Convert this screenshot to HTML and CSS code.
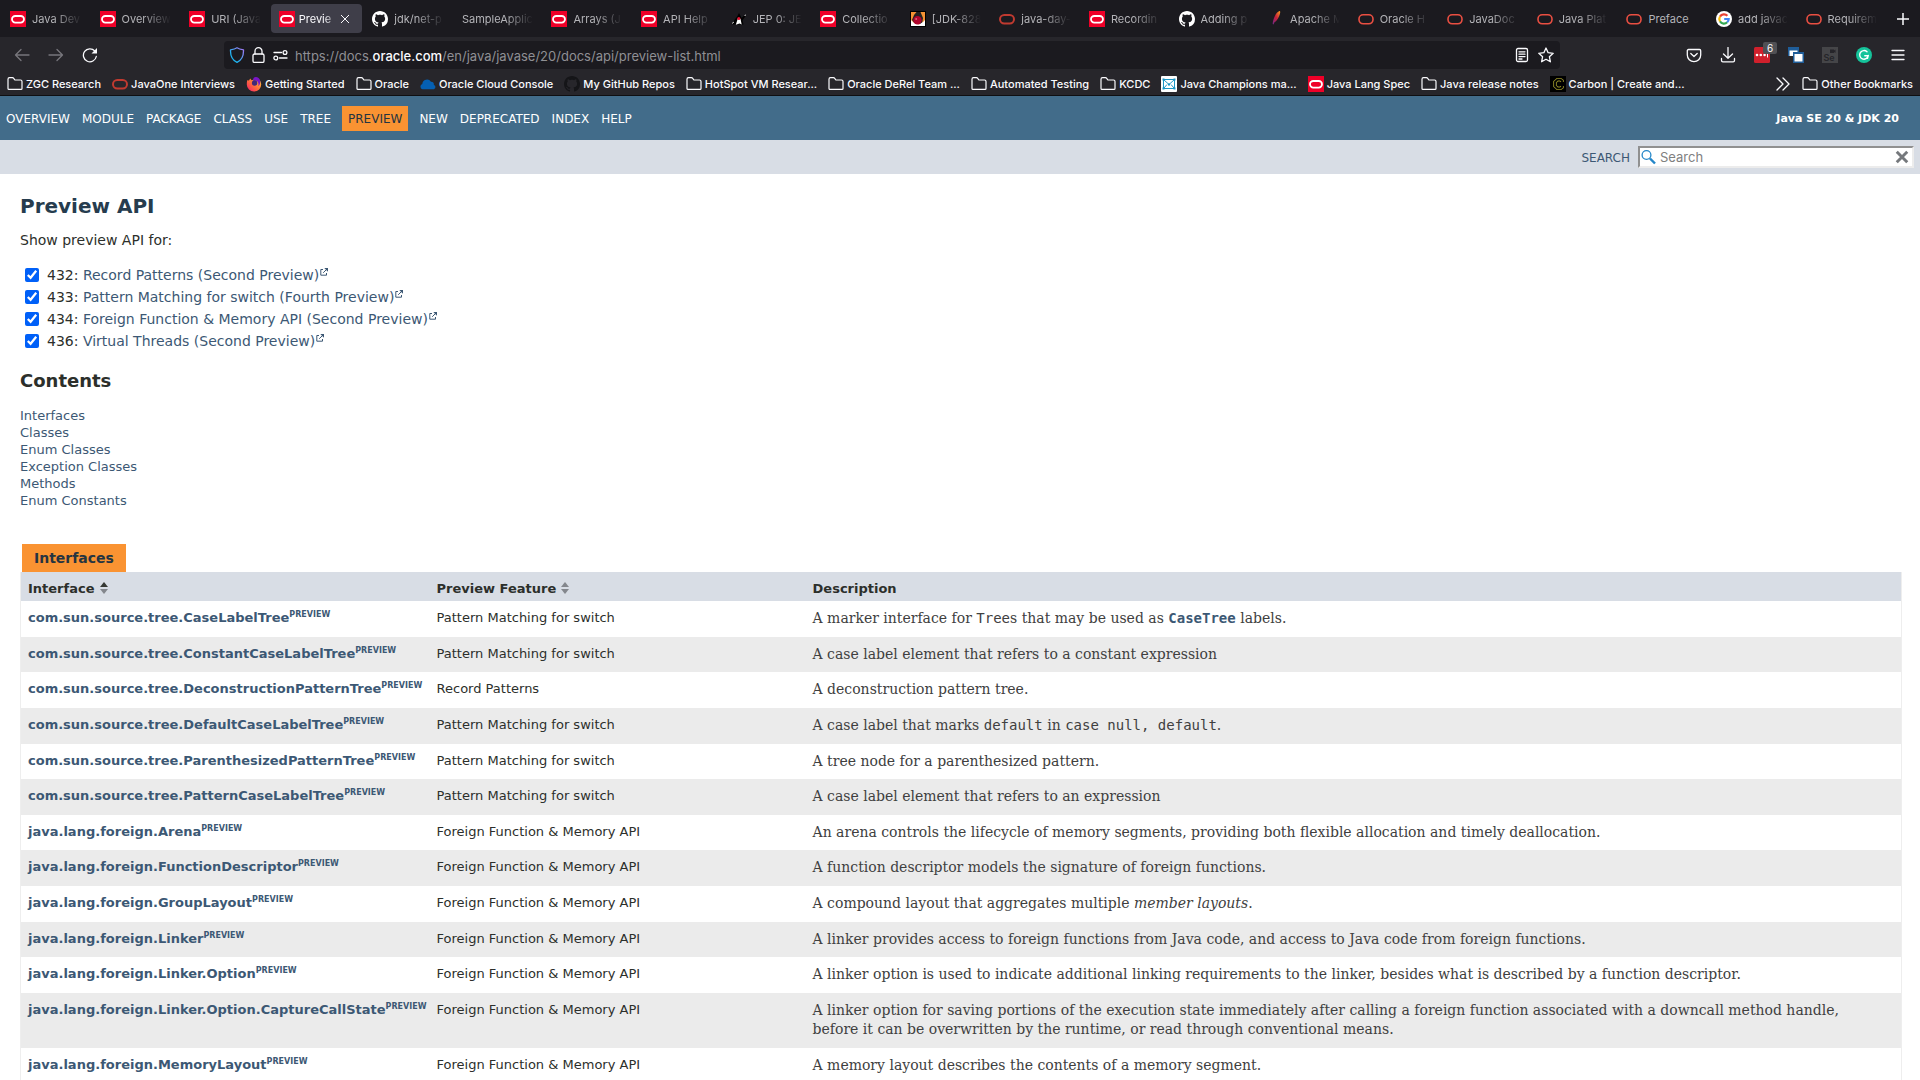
FILE: index.html
```
<!DOCTYPE html>
<html lang="en">
<head>
    <meta charset="UTF-8">
    <meta name="viewport" content="width=device-width, initial-scale=1.0">
    <title>Preview API (Java SE 20 &amp; JDK 20)</title>
    <link rel="stylesheet" href="styles.css">
</head>
<body>
    <!-- icon sprite -->
    <svg class="sprite" aria-hidden="true">
        <defs>
            <linearGradient id="shieldFill" x1="0" y1="1" x2="1" y2="0">
                <stop offset="0.3" stop-color="#1fb4f0"/><stop offset="0.9" stop-color="#9a7cf5"/>
            </linearGradient>
            <linearGradient id="featherFill" x1="0" y1="1" x2="1" y2="0">
                <stop offset="0" stop-color="#6d2a8c"/><stop offset="0.5" stop-color="#c8203a"/><stop offset="1" stop-color="#f6a01c"/>
            </linearGradient>
            <linearGradient id="foxFill" x1="0" y1="1" x2="1" y2="0">
                <stop offset="0" stop-color="#f5156c"/><stop offset="0.5" stop-color="#ff7139"/><stop offset="1" stop-color="#ffd23c"/>
            </linearGradient>
        </defs>
        <symbol id="oracle" viewBox="0 0 16 16">
            <rect width="16" height="16" fill="#ef0028"/>
            <rect x="2" y="5" width="12" height="6.6" rx="3.3" fill="none" stroke="#fff" stroke-width="1.8"/>
        </symbol>
        <symbol id="ring" viewBox="0 0 16 16">
            <rect x="1" y="4" width="14" height="8.6" rx="4.3" fill="none" stroke="currentColor" stroke-width="2"/>
        </symbol>
        <symbol id="ring-thin" viewBox="0 0 16 16">
            <rect x="1" y="3.8" width="14" height="9" rx="4.2" fill="none" stroke="currentColor" stroke-width="1.6"/>
        </symbol>
        <symbol id="github" viewBox="0 0 16 16">
            <path fill="currentColor" d="M8 0C3.58 0 0 3.58 0 8c0 3.54 2.29 6.53 5.47 7.59.4.07.55-.17.55-.38 0-.19-.01-.82-.01-1.49-2.01.37-2.53-.49-2.69-.94-.09-.23-.48-.94-.82-1.13-.28-.15-.68-.52-.01-.53.63-.01 1.08.58 1.23.82.72 1.21 1.87.87 2.33.66.07-.52.28-.87.51-1.07-1.78-.2-3.64-.89-3.64-3.95 0-.87.31-1.59.82-2.15-.08-.2-.36-1.02.08-2.12 0 0 .67-.21 2.2.82.64-.18 1.32-.27 2-.27s1.36.09 2 .27c1.53-1.04 2.2-.82 2.2-.82.44 1.1.16 1.92.08 2.12.51.56.82 1.27.82 2.15 0 3.07-1.87 3.75-3.65 3.95.29.25.54.73.54 1.48 0 1.07-.01 1.93-.01 2.2 0 .21.15.46.55.38A8.01 8.01 0 0 0 16 8c0-4.42-3.58-8-8-8z"/>
        </symbol>
        <symbol id="duke" viewBox="0 0 16 16">
            <path fill="#000" d="M8 2l2.600 5 3-3 1.400.5-3.500 5L12.500 13.500H3L.8 13l3-4.500L6.500 5z"/>
            <path fill="#fff" d="M6.800 7.500l2.700.3 1.200 5.700-2.200-1-3.700 1.200z"/>
            <path stroke="#fff" stroke-width=".8" d="M1 12.500l2-1.500M13.500 4.500l1.500-.5" fill="none"/>
            <circle cx="7.800" cy="7.600" r="1.500" fill="#e01030"/>
        </symbol>
        <symbol id="jdk" viewBox="0 0 16 16">
            <rect x=".5" y=".5" width="15" height="15" fill="#f59233" stroke="#000"/>
            <path fill="#222" d="M4 4l2.500-3h4l2.500 6-1 6H5L2 9z"/>
            <path fill="#fff" d="M1 9l3 3 5 1.500 4-2.500 2-2v6H1z"/>
            <circle cx="7.500" cy="9.300" r="4.200" fill="#b0052c"/>
            <circle cx="6.200" cy="8" r="1" fill="#e0607c"/>
        </symbol>
        <symbol id="feather" viewBox="0 0 16 16">
            <path fill="url(#featherFill)" d="M11.500 0c1.200 0 .8 2.500-.4 5.200C9.600 8.500 8 10.500 6.500 11.200l-1 2.300-.8-.5c.2-4.500 3.200-12 6.800-13z"/>
        </symbol>
        <symbol id="google" viewBox="0 0 16 16">
            <circle cx="8" cy="8" r="8" fill="#fff"/>
            <path fill="none" stroke="#ea4335" stroke-width="2.200" d="M4 5.600A4.700 4.700 0 0 1 11.400 4.800"/>
            <path fill="none" stroke="#fbbc05" stroke-width="2.200" d="M4 5.600a4.700 4.700 0 0 0 0 4.800"/>
            <path fill="none" stroke="#34a853" stroke-width="2.200" d="M4 10.400a4.700 4.700 0 0 0 7.200.9"/>
            <path fill="none" stroke="#4285f4" stroke-width="2.200" d="M11.200 11.300A4.700 4.700 0 0 0 12.700 8H8.200"/>
        </symbol>
        <symbol id="folder" viewBox="0 0 16 16">
            <path fill="none" stroke="currentColor" stroke-width="1.200" stroke-linejoin="round" d="M1 12.400V3.200c0-.9.600-1.500 1.500-1.500h3c.5 0 .9.200 1.200.6l1.200 1.700h5.600c.9 0 1.500.6 1.500 1.500v6.900c0 .6-.4 1-1 1H2c-.6 0-1-.4-1-1z"/>
        </symbol>
        <symbol id="firefox" viewBox="0 0 16 16">
            <path fill="url(#foxFill)" d="M1.200 4.200L3 4.400l1.200-1.800 1.400 1.600C7.500 4 9 2.500 11.500 2.200c2.200 1.300 3.700 3.500 3.700 6.100A7.200 7.200 0 0 1 .8 8.500c0-1.600.1-2.900.4-4.300z"/>
            <path fill="#7a16c8" d="M7.500 2C9.800-.2 13.500 1.500 14.200 5c.4 2-.6 4.200-2 5 .8-2.500-.2-4.800-2-5.200-1.100-.3-2.200-.2-3.200.3z"/>
            <circle cx="8.600" cy="7" r="2.700" fill="#402a78"/>
        </symbol>
        <symbol id="cloud" viewBox="0 0 16 16">
            <path fill="#0560b4" d="M2.500 13.200A2.700 2.700 0 0 1 2.300 8 4.700 4.700 0 0 1 11 5.800a3 3 0 0 1 2.900 3.200 2.200 2.200 0 0 1 0 4.200z"/>
        </symbol>
        <symbol id="champions" viewBox="0 0 16 16">
            <rect width="16" height="16" rx="1" fill="#fff"/>
            <path fill="none" stroke="#1c96c5" stroke-width="1" d="M2.500 3.500h11v9h-11zM2.500 3.500L8 8.500l5.500-5M3 12l3-3.500M13 12l-3-3.500"/>
            <path fill="#1c96c5" d="M1.500 2.500h2v2h-2zM12.500 2.500h2v2h-2zM1.500 11.500h2v2h-2zM12.500 11.500h2v2h-2zM7 7.500h2v2H7z"/>
        </symbol>
        <symbol id="carbon" viewBox="0 0 16 16">
            <rect width="16" height="16" fill="#000"/>
            <path fill="none" stroke="#97902a" stroke-width="3.600" d="M12 6V4.800L10.500 3.700h-3L5 6v4l2.500 2.300h3L12 11.200V10"/>
            <path fill="none" stroke="#000" stroke-width="1.800" d="M12 6V4.800L10.500 3.700h-3L5 6v4l2.500 2.300h3L12 11.200V10"/>
        </symbol>
        <symbol id="external" viewBox="0 0 8 8">
            <path fill="none" stroke="currentColor" stroke-width="1" d="M3 1.500H.8v5.700h5.700V5M3.200 4.800L6.800 1.200"/>
            <path fill="currentColor" d="M4.300 0H8v3.700L6.700 2.500z"/>
        </symbol>
    </svg>

    <header class="browser">
        <div class="tab-strip">
            <div class="tab"><svg class="icon"><use href="#oracle"/></svg><button type="button">Java Dev</button></div>
            <div class="tab"><svg class="icon"><use href="#oracle"/></svg><button type="button">Overview</button></div>
            <div class="tab"><svg class="icon"><use href="#oracle"/></svg><button type="button">URI (Java</button></div>
            <div class="tab active">
                <svg class="icon"><use href="#oracle"/></svg><button type="button">Previe</button>
                <button type="button" class="close" aria-label="Close tab"><svg viewBox="0 0 10 10"><path d="M1 1l8 8M9 1L1 9"/></svg></button>
            </div>
            <div class="tab"><svg class="icon white"><use href="#github"/></svg><button type="button">jdk/net-p</button></div>
            <div class="tab"><button type="button">SampleApplic</button></div>
            <div class="tab"><svg class="icon"><use href="#oracle"/></svg><button type="button">Arrays (J</button></div>
            <div class="tab"><svg class="icon"><use href="#oracle"/></svg><button type="button">API Help</button></div>
            <div class="tab"><svg class="icon"><use href="#duke"/></svg><button type="button">JEP 0: JE</button></div>
            <div class="tab"><svg class="icon"><use href="#oracle"/></svg><button type="button">Collectio</button></div>
            <div class="tab"><svg class="icon"><use href="#jdk"/></svg><button type="button">[JDK-828</button></div>
            <div class="tab"><svg class="icon dark-red"><use href="#ring"/></svg><button type="button">java-day-</button></div>
            <div class="tab"><svg class="icon"><use href="#oracle"/></svg><button type="button">Recordin</button></div>
            <div class="tab"><svg class="icon white"><use href="#github"/></svg><button type="button">Adding p</button></div>
            <div class="tab"><svg class="icon"><use href="#feather"/></svg><button type="button">Apache M</button></div>
            <div class="tab"><svg class="icon red"><use href="#ring-thin"/></svg><button type="button">Oracle H</button></div>
            <div class="tab"><svg class="icon red"><use href="#ring-thin"/></svg><button type="button">JavaDoc</button></div>
            <div class="tab"><svg class="icon red"><use href="#ring-thin"/></svg><button type="button">Java Plat</button></div>
            <div class="tab"><svg class="icon red"><use href="#ring-thin"/></svg><button type="button" class="full">Preface</button></div>
            <div class="tab"><svg class="icon"><use href="#google"/></svg><button type="button">add javac</button></div>
            <div class="tab"><svg class="icon red"><use href="#ring-thin"/></svg><button type="button">Requirem</button></div>
            <button type="button" class="new-tab" aria-label="New tab"><svg viewBox="0 0 12 12"><path d="M6 0v12M0 6h12"/></svg></button>
        </div>

        <div class="toolbar">
            <button type="button" class="tool dim" aria-label="Back"><svg class="icon" viewBox="0 0 16 16"><path d="M15 8H1.500M7 2.500L1.500 8 7 13.500"/></svg></button>
            <button type="button" class="tool dim" aria-label="Forward"><svg class="icon" viewBox="0 0 16 16"><path d="M1 8h13.500M9 2.500L14.500 8 9 13.500"/></svg></button>
            <button type="button" class="tool" aria-label="Reload"><svg class="icon" viewBox="0 0 16 16"><path d="M14.300 9.500A6.500 6.500 0 1 1 12.800 4"/><path class="solid" d="M15 1v5.500H9.500z"/></svg></button>
            <div class="url-bar">
                <svg class="icon" viewBox="0 0 16 16"><path stroke="url(#shieldFill)" d="M8 .8c2 1.400 4.200 1.700 6.500 2 .2 5.200-1.500 10.200-6.500 12.500C3 13 1.300 8 1.500 2.800 3.800 2.500 6 2.200 8 .8z"/></svg>
                <svg class="icon" viewBox="0 0 16 16"><rect x="2" y="7" width="11" height="8.400" rx="1.500"/><path d="M4 7V4.200a3.500 3.500 0 0 1 7 0V7"/></svg>
                <svg class="icon" viewBox="0 0 16 16"><path d="M1 5.500h7.500M6.500 11H14"/><circle cx="12" cy="5.500" r="1.900"/><circle cx="2.800" cy="11" r="1.900"/></svg>
                <div class="url" role="textbox" contenteditable="true" spellcheck="false" aria-label="Address">https://docs.<b>oracle.com</b>/en/java/javase/20/docs/api/preview-list.html</div>
                <button type="button" class="url-action" aria-label="Reader view"><svg class="icon" viewBox="0 0 16 16"><rect x="2.500" y="1.500" width="11" height="13" rx="1.500"/><path d="M5 4.800h6M5 7.200h6M5 9.600h6M5 12h3"/></svg></button>
                <button type="button" class="url-action" aria-label="Bookmark this page"><svg class="icon" viewBox="0 0 16 16"><path d="M8 1l2.100 4.700 5.100.6-3.800 3.400 1 5.100L8 12.300l-4.400 2.500 1-5.100L.8 6.300l5.100-.6z"/></svg></button>
            </div>
            <button type="button" class="tool" aria-label="Pocket"><svg class="icon" viewBox="0 0 16 16"><path d="M2.500 2.500h11c.7 0 1.200.5 1.200 1.200V8A6.700 6.700 0 0 1 1.300 8V3.700c0-.7.5-1.200 1.200-1.200zM4.800 6.500L8 9.500l3.200-3"/></svg></button>
            <button type="button" class="tool" aria-label="Downloads"><svg class="icon" viewBox="0 0 16 16"><path d="M8 .5v10.500M3.500 7L8 11.300 12.500 7M1.500 11.500v2c0 .8.6 1.400 1.400 1.400h10.200c.8 0 1.400-.6 1.400-1.400v-2"/></svg></button>
            <button type="button" class="tool" aria-label="Passwords">
                <svg class="icon fills" viewBox="0 0 16 16"><rect width="16" height="16" rx="1.500" fill="#d0202c"/><circle cx="3" cy="8" r="1.300" fill="#fff"/><circle cx="6.800" cy="8" r="1.300" fill="#fff"/><circle cx="10.600" cy="8" r="1.300" fill="#fff"/><rect x="13" y="6" width="1" height="4.500" fill="#fff"/></svg>
                <span class="badge">6</span>
            </button>
            <button type="button" class="tool" aria-label="Windows"><svg class="icon fills" viewBox="0 0 16 16"><rect width="11" height="9" fill="#1f5d99"/><rect x="1.500" y="3.500" width="8" height="5.500" fill="#fff"/><rect x="5" y="5" width="11" height="11" fill="#1f5d99"/><rect x="6.500" y="7" width="8" height="7.500" fill="#fff"/></svg></button>
            <button type="button" class="tool" aria-label="Selenium"><svg class="icon fills" viewBox="0 0 16 16"><rect width="16" height="16" fill="#454548"/><path fill="#26252a" d="M8 2.500h4v1l1.500-1v3.500L12 5v1H8z"/><text x="1.500" y="14" class="se-text">Se</text></svg></button>
            <button type="button" class="tool" aria-label="Grammarly"><svg class="icon fills" viewBox="0 0 16 16"><circle cx="8" cy="8" r="8" fill="#15c39a"/><path fill="none" stroke="#fff" stroke-width="1.400" d="M11 4.800A4.300 4.300 0 1 0 12.200 8.700H8.800M12.300 8.400l-.8 3"/></svg></button>
            <button type="button" class="tool" aria-label="Menu"><svg class="icon" viewBox="0 0 16 16"><path d="M2 3.500h12M2 8h12M2 12.500h12"/></svg></button>
        </div>

        <nav class="bookmarks" aria-label="Bookmarks">
            <a href="#"><svg class="icon"><use href="#folder"/></svg>ZGC Research</a>
            <a href="#"><svg class="icon dark-red"><use href="#ring"/></svg>JavaOne Interviews</a>
            <a href="#"><svg class="icon"><use href="#firefox"/></svg>Getting Started</a>
            <a href="#"><svg class="icon"><use href="#folder"/></svg>Oracle</a>
            <a href="#"><svg class="icon"><use href="#cloud"/></svg>Oracle Cloud Console</a>
            <a href="#"><svg class="icon black"><use href="#github"/></svg>My GitHub Repos</a>
            <a href="#"><svg class="icon"><use href="#folder"/></svg>HotSpot VM Resear...</a>
            <a href="#"><svg class="icon"><use href="#folder"/></svg>Oracle DeRel Team ...</a>
            <a href="#"><svg class="icon"><use href="#folder"/></svg>Automated Testing</a>
            <a href="#"><svg class="icon"><use href="#folder"/></svg>KCDC</a>
            <a href="#"><svg class="icon"><use href="#champions"/></svg>Java Champions ma...</a>
            <a href="#"><svg class="icon"><use href="#oracle"/></svg>Java Lang Spec</a>
            <a href="#"><svg class="icon"><use href="#folder"/></svg>Java release notes</a>
            <a href="#"><svg class="icon"><use href="#carbon"/></svg>Carbon | Create and...</a>
            <button type="button" class="overflow" aria-label="More bookmarks"><svg class="icon" viewBox="0 0 16 16"><path d="M2 2l6 6-6 6M8 2l6 6-6 6"/></svg></button>
            <a href="#"><svg class="icon"><use href="#folder"/></svg>Other Bookmarks</a>
        </nav>
    </header>

    <nav class="top-nav" aria-label="Documentation">
        <ul class="nav-list">
            <li><a href="#">Overview</a></li>
            <li><a href="#">Module</a></li>
            <li><a href="#">Package</a></li>
            <li><a href="#">Class</a></li>
            <li><a href="#">Use</a></li>
            <li><a href="#">Tree</a></li>
            <li class="nav-current">Preview</li>
            <li><a href="#">New</a></li>
            <li><a href="#">Deprecated</a></li>
            <li><a href="#">Index</a></li>
            <li><a href="#">Help</a></li>
        </ul>
        <strong class="about-language">Java SE 20 &amp; JDK 20</strong>
    </nav>

    <form class="sub-nav">
        <label for="search-input">SEARCH</label>
        <div class="search-box">
            <svg class="icon glass" viewBox="0 0 16 16"><circle cx="5.500" cy="6" r="4.400"/><path d="M9 9.500l5 5"/></svg>
            <input type="text" id="search-input" placeholder="Search">
            <button type="reset" aria-label="Clear search"><svg viewBox="0 0 12 12"><path d="M1.500 1.500l9 9M10.500 1.500l-9 9"/></svg></button>
        </div>
    </form>

    <main>
        <h1>Preview API</h1>
        <p class="intro">Show preview API for:</p>
        <div class="features">
            <div><input type="checkbox" id="jep432" checked><label for="jep432">432: <a href="#">Record Patterns (Second Preview)<svg class="external"><use href="#external"/></svg></a></label></div>
            <div><input type="checkbox" id="jep433" checked><label for="jep433">433: <a href="#">Pattern Matching for switch (Fourth Preview)<svg class="external"><use href="#external"/></svg></a></label></div>
            <div><input type="checkbox" id="jep434" checked><label for="jep434">434: <a href="#">Foreign Function &amp; Memory API (Second Preview)<svg class="external"><use href="#external"/></svg></a></label></div>
            <div><input type="checkbox" id="jep436" checked><label for="jep436">436: <a href="#">Virtual Threads (Second Preview)<svg class="external"><use href="#external"/></svg></a></label></div>
        </div>

        <h2>Contents</h2>
        <ul class="contents">
            <li><a href="#interface">Interfaces</a></li>
            <li><a href="#class">Classes</a></li>
            <li><a href="#enum-class">Enum Classes</a></li>
            <li><a href="#exception-class">Exception Classes</a></li>
            <li><a href="#method">Methods</a></li>
            <li><a href="#enum-constant">Enum Constants</a></li>
        </ul>

        <table class="summary-table" id="interface">
            <caption><span>Interfaces</span></caption>
            <thead>
                <tr>
                    <th class="col-first" scope="col">Interface<svg class="sort asc" viewBox="0 0 8 14"><path d="M4 1l4 5H0z"/><path d="M4 13l4-5H0z"/></svg></th>
                    <th class="col-second" scope="col">Preview Feature<svg class="sort" viewBox="0 0 8 14"><path d="M4 1l4 5H0z"/><path d="M4 13l4-5H0z"/></svg></th>
                    <th scope="col">Description</th>
                </tr>
            </thead>
            <tbody>
                <tr>
                    <td><a href="#">com.sun.source.tree.CaseLabelTree</a><sup><a href="#">PREVIEW</a></sup></td>
                    <td>Pattern Matching for switch</td>
                    <td><div class="block">A marker interface for <code>Tree</code>s that may be used as <a href="#"><code>CaseTree</code></a> labels.</div></td>
                </tr>
                <tr>
                    <td><a href="#">com.sun.source.tree.ConstantCaseLabelTree</a><sup><a href="#">PREVIEW</a></sup></td>
                    <td>Pattern Matching for switch</td>
                    <td><div class="block">A case label element that refers to a constant expression</div></td>
                </tr>
                <tr>
                    <td><a href="#">com.sun.source.tree.DeconstructionPatternTree</a><sup><a href="#">PREVIEW</a></sup></td>
                    <td>Record Patterns</td>
                    <td><div class="block">A deconstruction pattern tree.</div></td>
                </tr>
                <tr>
                    <td><a href="#">com.sun.source.tree.DefaultCaseLabelTree</a><sup><a href="#">PREVIEW</a></sup></td>
                    <td>Pattern Matching for switch</td>
                    <td><div class="block">A case label that marks <code>default</code> in <code>case null, default</code>.</div></td>
                </tr>
                <tr>
                    <td><a href="#">com.sun.source.tree.ParenthesizedPatternTree</a><sup><a href="#">PREVIEW</a></sup></td>
                    <td>Pattern Matching for switch</td>
                    <td><div class="block">A tree node for a parenthesized pattern.</div></td>
                </tr>
                <tr>
                    <td><a href="#">com.sun.source.tree.PatternCaseLabelTree</a><sup><a href="#">PREVIEW</a></sup></td>
                    <td>Pattern Matching for switch</td>
                    <td><div class="block">A case label element that refers to an expression</div></td>
                </tr>
                <tr>
                    <td><a href="#">java.lang.foreign.Arena</a><sup><a href="#">PREVIEW</a></sup></td>
                    <td>Foreign Function &amp; Memory API</td>
                    <td><div class="block">An arena controls the lifecycle of memory segments, providing both flexible allocation and timely deallocation.</div></td>
                </tr>
                <tr>
                    <td><a href="#">java.lang.foreign.FunctionDescriptor</a><sup><a href="#">PREVIEW</a></sup></td>
                    <td>Foreign Function &amp; Memory API</td>
                    <td><div class="block">A function descriptor models the signature of foreign functions.</div></td>
                </tr>
                <tr>
                    <td><a href="#">java.lang.foreign.GroupLayout</a><sup><a href="#">PREVIEW</a></sup></td>
                    <td>Foreign Function &amp; Memory API</td>
                    <td><div class="block">A compound layout that aggregates multiple <i>member layouts</i>.</div></td>
                </tr>
                <tr>
                    <td><a href="#">java.lang.foreign.Linker</a><sup><a href="#">PREVIEW</a></sup></td>
                    <td>Foreign Function &amp; Memory API</td>
                    <td><div class="block">A linker provides access to foreign functions from Java code, and access to Java code from foreign functions.</div></td>
                </tr>
                <tr>
                    <td><a href="#">java.lang.foreign.Linker.Option</a><sup><a href="#">PREVIEW</a></sup></td>
                    <td>Foreign Function &amp; Memory API</td>
                    <td><div class="block">A linker option is used to indicate additional linking requirements to the linker, besides what is described by a function descriptor.</div></td>
                </tr>
                <tr>
                    <td><a href="#">java.lang.foreign.Linker.Option.CaptureCallState</a><sup><a href="#">PREVIEW</a></sup></td>
                    <td>Foreign Function &amp; Memory API</td>
                    <td><div class="block">A linker option for saving portions of the execution state immediately after calling a foreign function associated with a downcall method handle, before it can be overwritten by the runtime, or read through conventional means.</div></td>
                </tr>
                <tr>
                    <td><a href="#">java.lang.foreign.MemoryLayout</a><sup><a href="#">PREVIEW</a></sup></td>
                    <td>Foreign Function &amp; Memory API</td>
                    <td><div class="block">A memory layout describes the contents of a memory segment.</div></td>
                </tr>
            </tbody>
        </table>
    </main>
</body>
</html>
```
FILE: styles.css
```
* {
    box-sizing: border-box;
}

body {
    margin: 0;
    height: 100vh;
    overflow: hidden;
    background: #fff;
    color: #2c2f2b;
    font-family: 'DejaVu Sans', Arial, sans-serif;
    font-size: 14px;
}

a {
    color: #3c5874;
    text-decoration: none;
}

button {
    padding: 0;
    border: none;
    background: none;
    color: inherit;
    font: inherit;
    cursor: pointer;
}

svg {
    display: block;
    flex: none;
}

.sprite {
    position: absolute;
    width: 0;
    height: 0;
}

.icon {
    width: 16px;
    height: 16px;
}

.white {
    color: #fff;
}

.black {
    color: #151518;
}

.red {
    color: #ea4f42;
}

.dark-red {
    color: #c03a30;
}

/* Browser window */
.browser {
    background: #27262b;
    color: #fbfbfe;
    font-family: Inter, sans-serif;
    font-size: 11px;
    border-bottom: 1px solid #0f0f12;
}

.tab-strip {
    display: flex;
    height: 37px;
    padding: 4px 0 4px 1px;
    background: #1b1a1f;
}

.tab {
    display: flex;
    flex: 1 1 0;
    align-items: center;
    gap: 6px;
    min-width: 0;
    margin: 0 1px;
    padding: 0 8px;
    border-radius: 4px;
    color: #b4b4b8;
}

.tab button {
    flex: 1;
    min-width: 0;
    text-align: left;
    white-space: nowrap;
    mask-image: linear-gradient(to left, transparent, #000 28px);
}

.tab .full {
    mask-image: none;
}

.tab.active {
    gap: 4px;
    padding-right: 12px;
    background: #3f3e49;
    color: #fbfbfe;
}

.tab.active button {
    mask-image: linear-gradient(to left, transparent, #000 16px);
}

.tab.active .close {
    flex: none;
    width: 10px;
    margin-left: -4px;
    mask-image: none;
}

.close svg,
.new-tab svg {
    width: 10px;
    height: 10px;
    fill: none;
    stroke: currentColor;
}

.new-tab {
    display: flex;
    align-items: center;
    justify-content: center;
    width: 34px;
}

.new-tab svg {
    width: 12px;
    height: 12px;
    stroke-width: 1.5;
}

.toolbar {
    display: flex;
    align-items: center;
    height: 36px;
    padding: 0 5px;
}

.tool {
    position: relative;
    display: flex;
    align-items: center;
    justify-content: center;
    width: 34px;
    height: 28px;
}

.dim {
    color: #77767c;
}

.tool .icon,
.url-bar .icon,
.overflow .icon {
    fill: none;
    stroke: currentColor;
    stroke-width: 1.3;
    stroke-linecap: round;
    stroke-linejoin: round;
}

.tool .fills {
    stroke: none;
}

.tool .solid {
    fill: currentColor;
    stroke: none;
}

.se-text {
    fill: #26252a;
    font-size: 9px;
    font-weight: 600;
}

.badge {
    position: absolute;
    top: 1px;
    right: 2px;
    width: 14px;
    border-radius: 2px;
    background: #505054;
    font-size: 10px;
    line-height: 12px;
}

.url-bar {
    display: flex;
    flex: 1;
    align-items: center;
    gap: 6px;
    height: 28px;
    margin: 0 117px;
    padding: 0 6px 0 5px;
    border-radius: 4px;
    background: #1b1a1f;
}

.url {
    flex: 1;
    padding-top: 1px;
    color: #8f8f94;
    font-size: 13px;
}

.url b {
    color: #fbfbfe;
    font-weight: 500;
}

.url-action {
    margin-left: 2px;
}

.bookmarks {
    display: flex;
    align-items: center;
    gap: 11px;
    height: 22px;
    padding: 0 7px 0 7px;
    font-weight: 500;
    white-space: nowrap;
}

.bookmarks a {
    display: flex;
    align-items: center;
    gap: 3px;
    color: inherit;
}

.overflow {
    margin-left: auto;
}

/* Javadoc navigation */
.top-nav {
    display: flex;
    align-items: center;
    justify-content: space-between;
    height: 44px;
    padding: 0 21px 0 0;
    background: #426c8a;
    color: #fff;
    font-size: 12px;
}

.nav-list {
    display: flex;
    margin: 0;
    padding: 0;
    list-style: none;
    line-height: 13px;
    text-transform: uppercase;
}

.nav-list li {
    padding: 7px 6px 5px;
}

.nav-list a {
    color: #fff;
}

.nav-list .nav-current {
    margin: 0 5px;
    background: #fa9332;
    color: #253441;
}

.about-language {
    font-size: 11px;
}

.sub-nav {
    display: flex;
    align-items: center;
    justify-content: flex-end;
    gap: 8px;
    height: 34px;
    padding: 0 6px;
    background: #d8dde5;
    color: #3c5874;
    font-size: 12px;
}

.sub-nav label {
    padding-top: 1px;
}

.search-box {
    display: flex;
    align-items: center;
    width: 276px;
    height: 22px;
    padding: 0 3px 0 1px;
    border: 2px solid;
    border-color: #909090 #ececec #ececec #909090;
    background: #fff;
}

.search-box input {
    flex: 1;
    min-width: 0;
    padding: 0 3px;
    border: none;
    outline: none;
    font: 13px Inter, sans-serif;
}

.search-box input::placeholder {
    color: #808080;
}

.search-box button svg {
    width: 14px;
    height: 14px;
    stroke: #75787c;
    stroke-width: 2.5;
}

.glass {
    fill: none;
    stroke: #2386c8;
    stroke-width: 1.3;
}

.glass path {
    stroke-width: 2.4;
}

/* Page content */
main {
    padding: 20px 18px 0 20px;
}

h1 {
    margin: 0;
    color: #263c4e;
    font-size: 20px;
    line-height: 24px;
}

.intro {
    margin: 12px 0 14px;
    line-height: 20px;
}

.features div {
    display: flex;
    align-items: center;
    height: 22px;
}

.features input {
    width: 14px;
    height: 14px;
    margin: 0 8px 0 5px;
    accent-color: #0060f8;
}

.external {
    display: inline-block;
    width: 8px;
    height: 8px;
    margin-left: 1px;
    vertical-align: 4px;
}

h2 {
    margin: 18px 0 15px;
    font-size: 18px;
    line-height: 22px;
}

.contents {
    margin: 0 0 35px;
    padding: 0;
    list-style: none;
    font-size: 13px;
    line-height: 17px;
}

.summary-table {
    width: 100%;
    border: 1px solid #eee;
    border-top: 0;
    border-spacing: 0;
    font-size: 13px;
    line-height: 1.4;
}

.summary-table caption {
    padding-left: 2px;
    text-align: left;
    font-size: 14px;
    font-weight: bold;
    line-height: 16px;
}

.summary-table caption span {
    display: inline-block;
    padding: 6px 12px;
    background: #fa9332;
    color: #253441;
    vertical-align: top;
}

th,
td {
    padding: 8px 3px 3px 7px;
    text-align: left;
    vertical-align: top;
}

thead {
    background: #d8dde5;
}

tbody tr:nth-child(even) {
    background: #ebebeb;
}

.col-first {
    width: 1%;
}

.col-second {
    width: 20%;
}

td:first-child {
    white-space: nowrap;
}

td a {
    font-weight: bold;
}

sup {
    font-size: 8px;
    line-height: 0;
}

.sort {
    display: inline-block;
    width: 8px;
    height: 14px;
    margin-left: 5px;
    fill: #84878d;
    vertical-align: -2px;
}

.asc path:first-child {
    fill: #353833;
}

.block {
    margin: 0 10px 5px 0;
    color: #404040;
    font-family: 'DejaVu Serif', Georgia, serif;
    font-size: 14px;
}

code {
    font-family: 'DejaVu Sans Mono', monospace;
    font-size: 14px;
}
```
